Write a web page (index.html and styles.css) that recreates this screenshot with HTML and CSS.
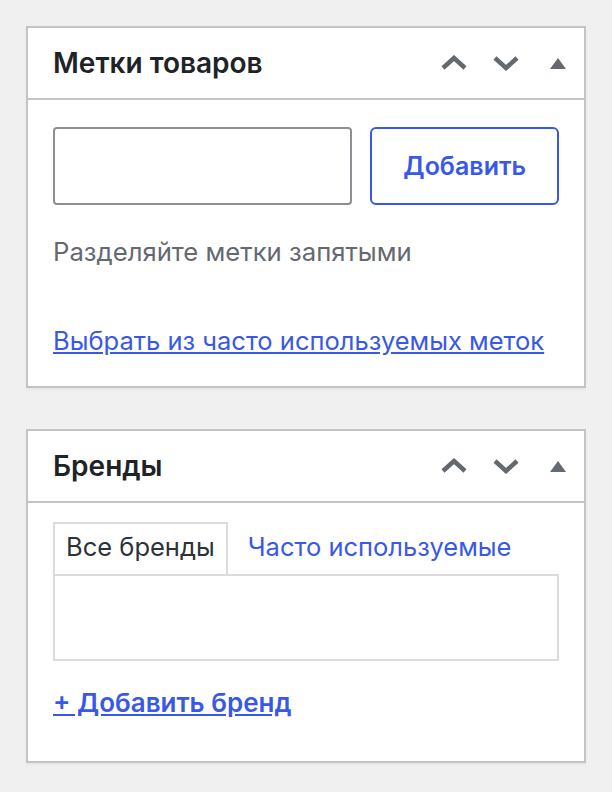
FILE: index.html
```html
<!DOCTYPE html>
<html lang="ru">
<head>
    <meta charset="UTF-8">
    <meta name="viewport" content="width=device-width, initial-scale=1.0">
    <title>Метки и бренды</title>
    <link rel="stylesheet" href="styles.css">
</head>
<body>
    <div class="postbox">
        <div class="postbox-header">
            <h2 class="hndle">Метки товаров</h2>
            <div class="handle-actions">
                <button class="handle-btn" aria-label="Вверх">
                    <svg width="28" height="16" viewBox="0 0 28 16"><polyline points="3,13 14,3 25,13" /></svg>
                </button>
                <button class="handle-btn" aria-label="Вниз">
                    <svg width="28" height="16" viewBox="0 0 28 16"><polyline points="3,3 14,13 25,3" /></svg>
                </button>
                <button class="handle-btn toggle" aria-label="Свернуть">
                    <svg width="16" height="11" viewBox="0 0 16 11"><polygon points="8,0 16,11 0,11" /></svg>
                </button>
            </div>
        </div>
        <div class="inside">
            <div class="tag-row">
                <input type="text" class="tag-input">
                <button class="button-add">Добавить</button>
            </div>
            <p class="howto">Разделяйте метки запятыми</p>
            <a href="#" class="tagcloud-link">Выбрать из часто используемых меток</a>
        </div>
    </div>

    <div class="postbox">
        <div class="postbox-header">
            <h2 class="hndle">Бренды</h2>
            <div class="handle-actions">
                <button class="handle-btn" aria-label="Вверх">
                    <svg width="28" height="16" viewBox="0 0 28 16"><polyline points="3,13 14,3 25,13" /></svg>
                </button>
                <button class="handle-btn" aria-label="Вниз">
                    <svg width="28" height="16" viewBox="0 0 28 16"><polyline points="3,3 14,13 25,3" /></svg>
                </button>
                <button class="handle-btn toggle" aria-label="Свернуть">
                    <svg width="16" height="11" viewBox="0 0 16 11"><polygon points="8,0 16,11 0,11" /></svg>
                </button>
            </div>
        </div>
        <div class="inside brands">
            <ul class="category-tabs">
                <li class="tab active">Все бренды</li>
                <li class="tab"><a href="#">Часто используемые</a></li>
            </ul>
            <div class="tabs-panel"></div>
            <a href="#" class="add-new">+ Добавить бренд</a>
        </div>
    </div>
</body>
</html>
```

FILE: styles.css
```css
body {
    margin: 0;
    padding: 26px 26px;
    background-color: #f0f0f1;
    font-family: Inter, "Noto Sans", sans-serif;
    color: #1d2327;
}

.postbox {
    width: 556px;
    background: #fff;
    border: 2px solid #c3c4c7;
    box-shadow: 0 2px 2px rgba(0, 0, 0, 0.04);
    margin-bottom: 41px;
}

.postbox-header {
    display: flex;
    align-items: center;
    justify-content: space-between;
    height: 70px;
    border-bottom: 2px solid #c3c4c7;
}

.hndle {
    margin: 0;
    padding-left: 25px;
    font-size: 28px;
    font-weight: 600;
    color: #1d2327;
}

.handle-actions {
    display: flex;
    align-items: center;
    padding-right: 18px;
}

.handle-btn {
    border: 0;
    background: none;
    padding: 0;
    margin-left: 24px;
    display: flex;
    align-items: center;
}

.handle-btn svg polyline {
    fill: none;
    stroke: #646970;
    stroke-width: 4.5;
}

.handle-btn svg polygon {
    fill: #646970;
}

.handle-btn.toggle {
    margin-left: 30px;
}

.inside {
    padding: 27px 25px 0;
    height: 259px;
}

.tag-row {
    display: flex;
    gap: 18px;
}

.tag-input {
    width: 300px;
    height: 78px;
    box-sizing: border-box;
    border: 2px solid #8c8f94;
    border-radius: 4px;
    margin: 0;
}

.button-add {
    width: 189px;
    height: 78px;
    box-sizing: border-box;
    border: 2px solid #3858e9;
    border-radius: 6px;
    background: #fff;
    color: #3858e9;
    font-family: inherit;
    font-size: 25px;
    font-weight: 600;
}

.howto {
    margin: 31px 0 0;
    font-size: 25.7px;
    color: #646970;
    line-height: 32px;
}

.tagcloud-link {
    display: inline-block;
    margin-top: 57px;
    font-size: 25.5px;
    line-height: 32px;
    color: #3858e9;
}

.inside.brands {
    padding-top: 19px;
    height: 239px;
}

.category-tabs {
    display: flex;
    list-style: none;
    margin: 0;
    padding: 0;
}

.tab {
    height: 52px;
    box-sizing: border-box;
    padding: 0 11px 5px;
    display: flex;
    align-items: center;
    font-size: 25.5px;
    border: 2px solid transparent;
    border-bottom: 0;
}

.tab.active {
    border-color: #dcdcde;
    color: #2c3338;
}

.tab a {
    color: #3858e9;
    text-decoration: none;
    margin-left: 7px;
}

.tabs-panel {
    height: 87px;
    box-sizing: border-box;
    border: 2px solid #dcdcde;
}

.add-new {
    display: inline-block;
    margin-top: 26px;
    font-size: 26px;
    font-weight: 600;
    line-height: 32px;
    color: #3858e9;
}
```
